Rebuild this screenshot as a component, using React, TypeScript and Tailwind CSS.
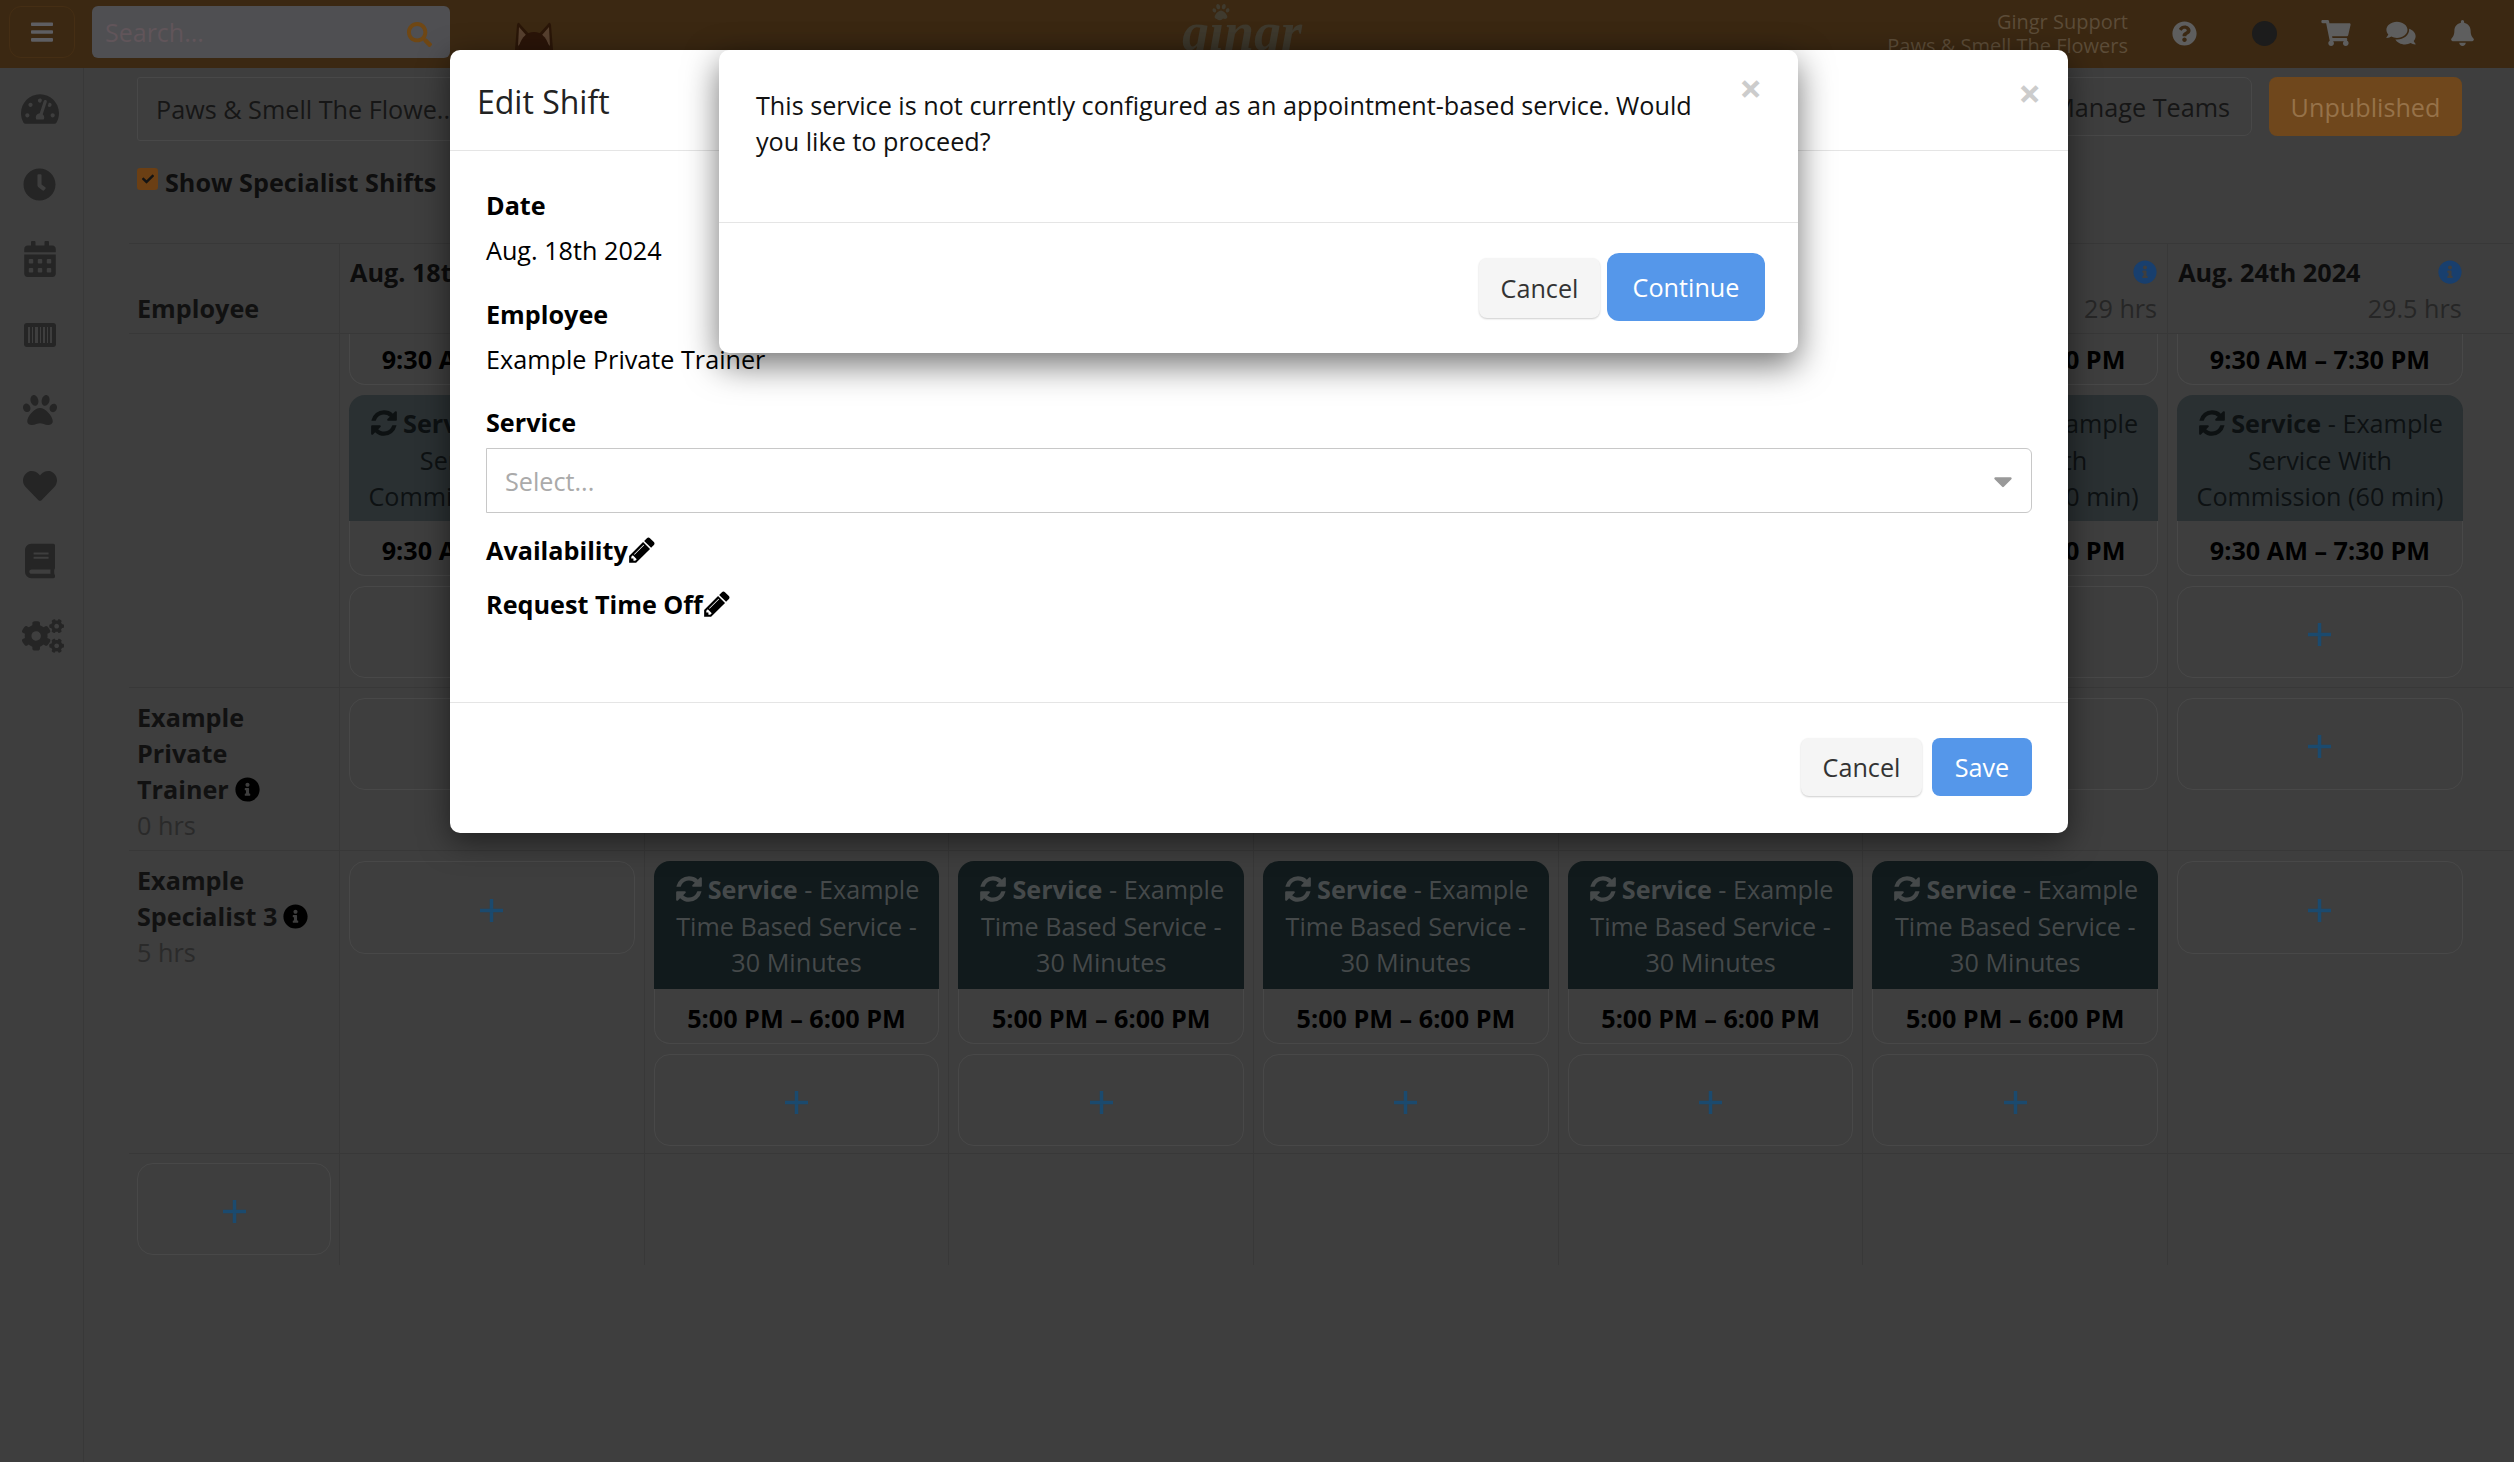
import React from "react";
import {
  FaBars, FaSearch, FaQuestionCircle, FaShoppingCart, FaComments, FaBell, FaTachometerAlt, FaClock,
  FaCalendarAlt, FaPaw, FaHeart, FaBook, FaCogs, FaInfoCircle, FaCheck, FaCaretDown,
} from "react-icons/fa";

const Pencil = ({ className }: { className?: string }) => (
  <svg viewBox="0 0 1792 1792" fill="currentColor" className={className}>
    <path d="M491 1536l91-91-235-235-91 91v107h128v128h107zm523-928q0-22-22-22-10 0-17 7l-542 542q-7 7-7 17 0 22 22 22 10 0 17-7l542-542q7-7 7-17zm-54-192l416 416-832 832h-416v-416zm683 96q0 53-37 90l-166 166-416-416 166-165q36-38 90-38 53 0 91 38l235 234q37 39 37 91z" />
  </svg>
);

const Refresh = ({ className }: { className?: string }) => (
  <svg viewBox="0 0 1792 1792" fill="currentColor" className={className}>
    <path d="M1639 1056q0 5-1 7-64 268-268 434.5t-478 166.5q-146 0-282.5-55t-243.5-157l-129 129q-19 19-45 19t-45-19-19-45v-448q0-26 19-45t45-19h448q26 0 45 19t19 45-19 45l-137 137q71 66 161 102t187 36q134 0 250-65t186-179q11-17 53-117 8-23 30-23h192q13 0 22.5 9.5t9.5 22.5zm25-800v448q0 26-19 45t-45 19h-448q-26 0-45-19t-19-45 19-45l138-138q-148-137-349-137-134 0-250 65t-186 179q-11 17-53 117-8 23-30 23h-199q-13 0-22.5-9.5t-9.5-22.5v-7q65-268 270-434.5t480-166.5q146 0 284 55.5t245 156.5l130-129q19-19 45-19t45 19 19 45z" />
  </svg>
);

const Barcode = () => (
  <svg viewBox="0 0 32 24" className="h-[24px] w-[32px]">
    <rect width="32" height="24" rx="3" fill="#252525" />
    <g fill="#3e3e3e">
      <rect x="4" y="4" width="2" height="16" />
      <rect x="8" y="4" width="1" height="16" />
      <rect x="11" y="4" width="3" height="16" />
      <rect x="16" y="4" width="1" height="16" />
      <rect x="19" y="4" width="2" height="16" />
      <rect x="23" y="4" width="1" height="16" />
      <rect x="26" y="4" width="2" height="16" />
    </g>
  </svg>
);

const Cat = () => (
  <svg viewBox="0 0 40 30" className="h-[30px] w-[40px]">
    <path d="M1 30 L3 5 Q4 1 6 4 L15 14 L25 14 L34 4 Q36 1 37 5 L39 30 Z" fill="#2a1608" />
    <path d="M4 26 L5 7 L12 15 L6 24 Z M36 26 L35 7 L28 15 L34 24 Z" fill="#57402f" />
    <ellipse cx="20" cy="30" rx="15" ry="18" fill="#2a1408" />
  </svg>
);

const Plus = () => (
  <svg viewBox="0 0 23 23" className="mt-[5px] h-[23px] w-[23px] text-[#1b4a6e]" fill="currentColor">
    <rect x="9.75" y="0" width="3.5" height="23" />
    <rect x="0" y="9.75" width="23" height="3.5" />
  </svg>
);

const AddCard = ({ h = 92 }: { h?: number }) => (
  <div
    className="flex shrink-0 items-center justify-center rounded-[16px] border border-[#484848]"
    style={{ height: h }}
  >
    <Plus />
  </div>
);

const ShiftCard = ({ lines, dark, time }: { lines: [string, string, string]; dark?: boolean; time: string }) => (
  <div className="flex shrink-0 flex-col">
    <div
      className={`flex flex-col items-center rounded-t-[16px] px-[8px] pt-[10px] text-center leading-[36.5px] ${
        dark ? "bg-[#111a1c] pb-[8.5px] text-[#45494a]" : "bg-[#2a3032] pb-[6.5px] text-[#0d1112]"
      }`}
    >
      <div className="flex items-center whitespace-nowrap">
        <Refresh className="mr-[4px] h-[30px] w-[30px]" />
        <b className="font-bold">Service</b>&nbsp;- {lines[0]}
      </div>
      <div className="whitespace-nowrap">{lines[1]}</div>
      <div className="whitespace-nowrap">{lines[2]}</div>
    </div>
    <div className="flex h-[55px] items-center justify-center whitespace-nowrap rounded-b-[16px] border border-t-0 border-[#484848] pt-[3px] font-bold text-black">{time}</div>
  </div>
);

const TopTime = ({ time }: { time: string }) => (
  <div className="flex h-[51px] shrink-0 items-center justify-center whitespace-nowrap rounded-b-[16px] border border-t-0 border-[#484848] font-bold text-black">
    {time}
  </div>
);

const days = [
  ["Aug. 18th 2024", "29.5 hrs"],
  ["Aug. 19th 2024", "29 hrs"],
  ["Aug. 20th 2024", "29 hrs"],
  ["Aug. 21st 2024", "29 hrs"],
  ["Aug. 22nd 2024", "29 hrs"],
  ["Aug. 23rd 2024", "29 hrs"],
  ["Aug. 24th 2024", "29.5 hrs"],
];

const Row = ({ label, children, height, last }: { label: React.ReactNode; children: React.ReactNode; height: number; last?: boolean }) => (
  <div
    className={`grid grid-cols-[210px_repeat(7,304.7px)] ${last ? "" : "border-b border-[#383838]"}`}
    style={{ height }}
  >
    <div className="px-[8px]">{label}</div>
    {children}
  </div>
);

const Cell = ({ children, top }: { children?: React.ReactNode; top?: boolean }) => (
  <div className={`flex flex-col gap-[10px] border-l border-[#383838] pr-[9px] pl-[9px] ${top ? "" : "pt-[10px]"}`}>{children}</div>
);

const svc: [string, string, string] = ["Example", "Service With", "Commission (60 min)"];
const tb: [string, string, string] = ["Example", "Time Based Service -", "30 Minutes"];
const morning = "9:30 AM – 7:30 PM";
const evening = "5:00 PM – 6:00 PM";

const sideIcons = [
  <FaTachometerAlt className="h-[38px] w-[38px]" />,
  <FaClock className="h-[33px] w-[33px]" />,
  <FaCalendarAlt className="h-[36px] w-[32px]" />,
  <Barcode />,
  <FaPaw className="h-[34px] w-[34px]" />,
  <FaHeart className="h-[34px] w-[34px]" />,
  <FaBook className="h-[36px] w-[30px]" />,
  <FaCogs className="ml-[6px] h-[36px] w-[42px]" />,
];

export default function App() {
  return (
    <div className="relative h-[1462px] w-[2514px] overflow-hidden bg-[#3e3e3e] font-['Open_Sans','Noto_Sans',sans-serif] text-[25.2px] leading-[36px] text-black">
      {/* Top bar */}
      <header className="flex h-[68px] items-start bg-[#3b2812]">
        <div className="ml-[9px] mt-[6px] flex h-[52px] w-[66px] items-center justify-center rounded-[12px] border border-[#452e14] text-[#5e5e62]">
          <FaBars className="h-[26px] w-[22px]" />
        </div>
        <div className="ml-[17px] mt-[6px] flex h-[52px] w-[358px] items-center justify-between rounded-[6px] bg-[#4f4f52] pr-[18px] pl-[13px]">
          <span className="text-[25px] text-[#61555a]">Search...</span>
          <FaSearch className="mt-[5px] h-[25px] w-[25px] text-[#6f4714]" />
        </div>
        <div className="mt-[20px] ml-[64px]"><Cat /></div>
        <div className="relative mt-[2px] ml-[628px] font-['Liberation_Serif',serif] text-[54px] font-bold italic leading-[60px] text-[#3f3a2e]">
          gingr
          <FaPaw className="absolute top-[1px] left-[30px] h-[17px] w-[18px]" />
        </div>
        <div className="ml-auto mr-[40px] flex items-center">
          <div className="mr-[44px] text-right text-[20px] leading-[24px] text-[#5c4c38]">
            <div className="mt-[10px]">Gingr Support</div>
            <div>Paws &amp; Smell The Flowers</div>
          </div>
          <FaQuestionCircle className="mt-[8px] h-[25px] w-[25px] text-[#5e5e5e]" />
          <div className="mt-[8px] ml-[55px] h-[25px] w-[25px] rounded-full bg-[#1c1c1c]" />
          <FaShoppingCart className="mt-[8px] ml-[44px] h-[26px] w-[30px] text-[#5e5e5e]" />
          <FaComments className="mt-[8px] ml-[35px] h-[26px] w-[30px] text-[#5e5e5e]" />
          <FaBell className="mt-[8px] ml-[35px] h-[26px] w-[23px] text-[#5e5e5e]" />
        </div>
      </header>

      <div className="flex">
        {/* Sidebar */}
        <nav className="flex h-[1394px] w-[84px] shrink-0 flex-col items-center border-r border-[#383838] pt-[3px] pr-[4px] text-[#252525]">
          {sideIcons.map((icon, i) => (
            <div key={i} className="flex h-[75.4px] shrink-0 items-center justify-center">
              {icon}
            </div>
          ))}
        </nav>

        <main className="w-[2429px] pl-[45px]">
          {/* Toolbar */}
          <div className="flex items-start pt-[9px] pr-[51px] pl-[8px]">
            <div className="flex h-[64px] w-[340px] items-center rounded-[3px] border border-[#484848] pl-[18px] text-[#161616]">
              Paws &amp; Smell The Flowe...
            </div>
            <div className="ml-auto flex h-[59px] w-[264px] items-center justify-end rounded-[8px] border border-[#484848] pr-[21px] text-[#161616]">
              Manage Teams
            </div>
            <div className="ml-[17px] flex h-[59px] w-[193px] items-center justify-center rounded-[8px] bg-[#6f471c] text-[#967249]">
              Unpublished
            </div>
          </div>

          <div className="mt-[23px] ml-[8px] flex h-[36px] items-center font-bold text-[#0e0e0e]">
            <span className="mr-[7px] mb-[7px] flex h-[22px] w-[21px] items-center justify-center rounded-[3px] bg-[#6b3f14] text-[#141414]">
              <FaCheck className="h-[12px] w-[12px]" />
            </span>
            Show Specialist Shifts
          </div>

          {/* Table */}
          <div className="mt-[43px] border-t border-[#383838]">
            <div className="grid h-[90px] grid-cols-[210px_repeat(7,304.7px)] border-b border-[#383838]">
              <div className="px-[8px] pt-[46px] font-bold text-[#111]">Employee</div>
              {days.map(([d, h]) => (
                <div key={d} className="border-l border-[#383838] px-[10px] pt-[10px]">
                  <div className="flex items-center justify-between font-bold text-[#0c0c0c]">
                    <span className="whitespace-nowrap">{d}</span>
                    <FaInfoCircle className="h-[24px] w-[24px] text-[#183f6e]" />
                  </div>
                  <div className="text-right text-[#262626]">{h}</div>
                </div>
              ))}
            </div>

            <Row height={354} label={null}>
              {days.map(([d]) => (
                <Cell key={d} top>
                  <TopTime time={morning} />
                  <ShiftCard lines={svc} time={morning} />
                  <AddCard />
                </Cell>
              ))}
            </Row>

            <Row
              height={163}
              label={
                <div className="pt-[11px]">
                  <div className="font-bold text-[#111]">Example</div>
                  <div className="font-bold text-[#111]">Private</div>
                  <div className="flex items-center gap-[6px] font-bold text-[#111]">Trainer <FaInfoCircle className="h-[25px] w-[25px] text-black" /></div>
                  <div className="text-[#2a2a2a]">0 hrs</div>
                </div>
              }
            >
              {days.map(([d]) => (
                <Cell key={d}><AddCard /></Cell>
              ))}
            </Row>

            <Row
              height={303}
              label={
                <div className="pt-[11px]">
                  <div className="font-bold text-[#111]">Example</div>
                  <div className="flex items-center gap-[6px] whitespace-nowrap font-bold text-[#111]">Specialist 3 <FaInfoCircle className="h-[25px] w-[25px] text-black" /></div>
                  <div className="text-[#2a2a2a]">5 hrs</div>
                </div>
              }
            >
              <Cell><AddCard h={93} /></Cell>
              {[1, 2, 3, 4, 5].map((k) => (
                <Cell key={k}>
                  <ShiftCard dark lines={tb} time={evening} />
                  <AddCard />
                </Cell>
              ))}
              <Cell><AddCard h={93} /></Cell>
            </Row>

            <Row height={111} last label={<div className="pt-[9px]"><AddCard /></div>}>
              {days.map(([d]) => (
                <Cell key={d} />
              ))}
            </Row>
          </div>
        </main>
      </div>

      {/* Edit Shift modal */}
      <div className="absolute top-[50px] left-[450px] flex h-[783px] w-[1618px] flex-col rounded-[10px] bg-white shadow-[0_8px_30px_rgba(0,0,0,0.5)]">
        <div className="relative h-[101px] shrink-0 border-b border-[#e5e5e5] pt-[32px] pl-[27px] text-[32px] leading-[40px] text-[#222]">
          Edit Shift
          <span className="absolute top-[18px] right-[27px] text-[40px] font-bold leading-[50px] text-[#cccccc]">×</span>
        </div>
        <div className="flex h-[551px] shrink-0 flex-col px-[36px] pt-[36px]">
          <div className="font-bold">Date</div>
          <div className="mt-[9px]">Aug. 18th 2024</div>
          <div className="mt-[28px] font-bold">Employee</div>
          <div className="mt-[9px]">Example Private Trainer</div>
          <div className="mt-[27px] font-bold">Service</div>
          <div className="mt-[8px] flex h-[65px] items-center justify-between rounded-r-[6px] border border-[#c8c8c8] pr-[13px] pl-[18px] text-[#aaaaaa]">
            Select...
            <FaCaretDown className="h-[30px] w-[30px] text-[#999]" />
          </div>
          <div className="mt-[19px] flex items-center font-bold">Availability<Pencil className="-ml-[1px] h-[30px] w-[30px]" /></div>
          <div className="mt-[18px] flex items-center font-bold">Request Time Off<Pencil className="-ml-[1px] h-[30px] w-[30px]" /></div>
        </div>
        <div className="flex flex-1 items-start justify-end gap-[10px] border-t border-[#e5e5e5] pt-[35px] pr-[36px]">
          <button className="h-[58px] w-[121px] rounded-[8px] bg-[#f5f5f5] text-[#333] shadow-[0_1px_2px_rgba(0,0,0,0.2)]">Cancel</button>
          <button className="h-[58px] w-[100px] rounded-[8px] bg-[#5597ea] text-white">Save</button>
        </div>
      </div>

      {/* Confirm modal */}
      <div className="absolute top-[50px] left-[719px] flex h-[303px] w-[1079px] flex-col rounded-[10px] bg-white shadow-[0_12px_34px_rgba(0,0,0,0.55)]">
        <div className="relative h-[172px] shrink-0 pt-[37px] pr-[90px] pl-[37px] text-[#111]">
          This service is not currently configured as an appointment-based service. Would you like to proceed?
          <span className="absolute top-[13px] right-[36px] text-[40px] font-bold leading-[50px] text-[#cccccc]">×</span>
        </div>
        <div className="flex flex-1 items-start justify-end gap-[7px] border-t border-[#e5e5e5] pr-[33px]">
          <button className="mt-[35px] h-[60px] w-[121px] rounded-[8px] bg-[#f5f5f5] text-[#333] shadow-[0_1px_2px_rgba(0,0,0,0.2)]">Cancel</button>
          <button className="mt-[30px] h-[68px] w-[158px] rounded-[12px] bg-[#5597ea] text-white">Continue</button>
        </div>
      </div>
    </div>
  );
}
